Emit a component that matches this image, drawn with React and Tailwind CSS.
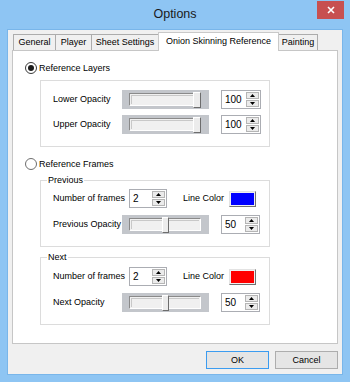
import React from "react";

function Tri({ up }) {
  return (
    <svg width="5" height="3" viewBox="0 0 5 3" className="block">
      {up ? <path d="M0 3 L2.5 0 L5 3 Z" fill="#000" /> : <path d="M0 0 L2.5 3 L5 0 Z" fill="#000" />}
    </svg>
  );
}

function Numeric({ value, w = "w-[40px]" }) {
  return (
    <div className={`${w} h-[19px] border border-[#abadb3] bg-white flex items-stretch`}>
      <span className="flex-1 pl-[3px] flex items-center text-[10px] leading-none text-black">{value}</span>
      <div className="w-[14px] flex flex-col justify-center gap-[1px] pr-[1px] py-[1px]">
        <div className="flex-1 border border-[#b5b5b5] bg-[#ebebeb] flex items-center justify-center">
          <Tri up />
        </div>
        <div className="flex-1 border border-[#b5b5b5] bg-[#ebebeb] flex items-center justify-center">
          <Tri />
        </div>
      </div>
    </div>
  );
}

function Trackbar({ mid }) {
  return (
    <div className="w-[87px] h-[19px] bg-[#c3c6cb] flex items-center pl-[7px]">
      <div className="relative w-[72px] h-[13px] border-t border-l border-t-[#8a8a8a] border-l-[#8a8a8a] border-b border-r border-b-white border-r-white bg-[#f0f0f0]">
        <div className="absolute inset-[1px] border-t border-l border-t-[#c8c8c8] border-l-[#c8c8c8]" />
        <div
          className={`absolute top-[-2px] h-[16px] ${mid ? "left-[32px] w-[7px]" : "left-[63px] w-[8px]"} bg-[#ececec] border-t border-l border-t-white border-l-white border-b border-r border-b-[#6d6d6d] border-r-[#6d6d6d]`}
        />
      </div>
    </div>
  );
}

function Radio({ checked, label }) {
  return (
    <div className="flex items-center h-[12px] ml-[12px]">
      <div className={`w-[12px] h-[12px] rounded-full border ${checked ? "border-[#3a3a3a]" : "border-[#6e6e6e]"} bg-white flex items-center justify-center`}>
        {checked && <div className="w-[6px] h-[6px] rounded-full bg-[#1b1b1b]" />}
      </div>
      <span className="ml-[2px] text-black">{label}</span>
    </div>
  );
}

function ColorBox({ color }) {
  return (
    <div className="w-[27px] h-[16px] border-t border-l border-t-[#e3e3e3] border-l-[#e3e3e3] border-b border-r border-b-[#707070] border-r-[#707070] p-[1px] bg-[#f0f0f0]">
      <div className={`w-full h-full ${color}`} />
    </div>
  );
}

function FrameGroup({ title, opacityLabel, color, mtRow }) {
  return (
    <div className="ml-[27px] w-[230px] border border-[#dcdcdc] flex flex-col pb-[12px]">
      <span className="-mt-[6px] ml-[6px] px-[1px] w-fit bg-white leading-[11px] text-black">{title}</span>
      <div className={`flex items-center pl-[12px] ${mtRow}`}>
        <span className="w-[76px] text-black">Number of frames</span>
        <Numeric value="2" w="w-[38px]" />
        <span className="ml-[16px] w-[46px] text-black">Line Color</span>
        <ColorBox color={color} />
      </div>
      <div className="flex items-center pl-[12px] mt-[7px]">
        <span className="w-[69px] text-black">{opacityLabel}</span>
        <Trackbar mid />
        <div className="ml-[12px]">
          <Numeric value="50" w="w-[39px]" />
        </div>
      </div>
    </div>
  );
}

function Tab({ label, w, selected, first }) {
  if (selected) {
    return (
      <div className={`${w} h-[19px] -mb-[1px] -ml-[1px] relative z-10 bg-white border-t border-l border-r border-[#c9c9c9] flex items-start justify-center pt-[3px] text-black`}>
        {label}
      </div>
    );
  }
  return (
    <div className={`${w} h-[16px] ${first ? "" : "-ml-[1px]"} bg-[#f0f0f0] border-t border-l border-r border-[#acacac] flex items-center justify-center text-black`}>
      {label}
    </div>
  );
}

export default function App() {
  return (
    <div className="w-[350px] h-[382px] bg-[#8ec5f3] flex flex-col font-['Liberation_Sans',Arial,sans-serif] text-[9px] leading-[11px] overflow-hidden">
      <div className="relative h-[29px] flex items-center justify-center">
        <span className="text-[12.5px] text-[#1a1a1a] -mt-[1px]">Options</span>
        <div className="absolute right-[6px] top-[1px] w-[27px] h-[18px] bg-[#c75050] flex items-center justify-center">
          <svg width="8" height="8" viewBox="0 0 8 8">
            <path d="M1 1 L7 7 M7 1 L1 7" stroke="#fff" strokeWidth="1.6" />
          </svg>
        </div>
      </div>
      <div className="ml-[7px] w-[336px] h-[346px] border border-[#79b6ea] bg-[#f0f0f0] flex flex-col">
        <div className="h-[20px] flex items-end ml-[5px]">
          <Tab label="General" w="w-[43px]" first />
          <Tab label="Player" w="w-[37px]" />
          <Tab label="Sheet Settings" w="w-[68px]" />
          <Tab label="Onion Skinning Reference" w="w-[121px]" selected />
          <Tab label="Painting" w="w-[40px]" />
        </div>
        <div className="ml-[4px] w-[326px] h-[294px] border border-[#c6c6c6] bg-white flex flex-col">
          <div className="mt-[11px]">
            <Radio checked label="Reference Layers" />
          </div>
          <div className="mt-[6px] ml-[27px] w-[230px] h-[67px] border border-[#dcdcdc] flex flex-col pt-[9px]">
            <div className="flex items-center pl-[12px]">
              <span className="w-[69px] text-black">Lower Opacity</span>
              <Trackbar />
              <div className="ml-[12px]">
                <Numeric value="100" />
              </div>
            </div>
            <div className="flex items-center pl-[12px] mt-[6px]">
              <span className="w-[69px] text-black">Upper Opacity</span>
              <Trackbar />
              <div className="ml-[12px]">
                <Numeric value="100" />
              </div>
            </div>
          </div>
          <div className="mt-[11px]">
            <Radio label="Reference Frames" />
          </div>
          <div className="mt-[10px]">
            <FrameGroup title="Previous" opacityLabel="Previous Opacity" color="bg-[#0000ff]" mtRow="mt-[3px]" />
          </div>
          <div className="mt-[10px]">
            <FrameGroup title="Next" opacityLabel="Next Opacity" color="bg-[#ff0000]" mtRow="mt-[4px]" />
          </div>
        </div>
        <div className="mt-[7px] flex justify-end gap-[6px] pr-[4px]">
          <div className="w-[63px] h-[18px] border border-[#3c9cf0] bg-[#e5e5e5] flex items-center justify-center text-black">OK</div>
          <div className="w-[63px] h-[18px] border border-[#adadad] bg-[#e5e5e5] flex items-center justify-center text-black">Cancel</div>
        </div>
      </div>
    </div>
  );
}
